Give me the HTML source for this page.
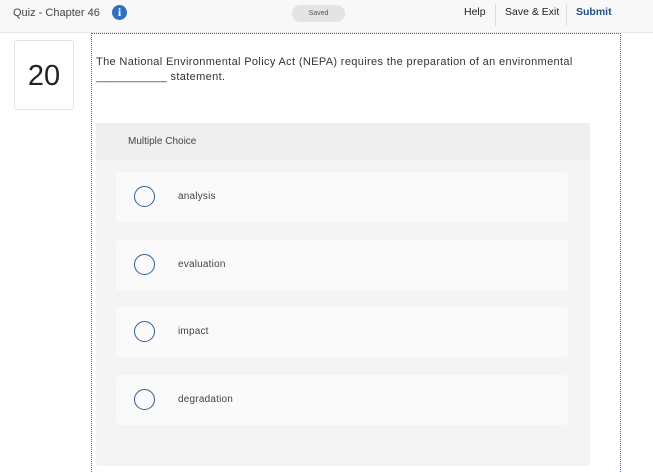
<!DOCTYPE html>
<html style="overflow:hidden;height:472px"><head><style>
body{margin:0;width:653px;height:472px;overflow:hidden;background:#fff;font-family:"Liberation Sans",sans-serif;position:relative;color:#333}
.hdr{position:absolute;left:0;top:0;width:653px;height:32px;background:#f8f8f8;border-bottom:1px solid #e6e6e6}
.a{position:absolute}
.opt{position:absolute;left:116px;width:452px;height:50px;background:#fafafa;border-radius:3px}
.opt .c{position:absolute;left:18px;top:14px;width:19px;height:19px;border:1.5px solid #2f5f94;border-radius:50%}
.opt .t{position:absolute;left:62px;top:19px;font-size:10px;color:#444;letter-spacing:0.2px}
</style></head><body>
<div class="hdr"></div>
<div class="a" style="left:13px;top:7px;font-size:11px;color:#444">Quiz - Chapter 46</div>
<div class="a" style="left:112px;top:5px;width:15px;height:15px;border-radius:50%;background:#2f6fbf;color:#fff;font-weight:bold;font-size:12px;text-align:center;line-height:15px;font-family:'Liberation Serif',serif">i</div>
<div class="a" style="left:292px;top:5px;width:53px;height:17px;border-radius:9px;background:#e4e4e4;font-size:7px;color:#555;text-align:center;line-height:17px">Saved</div>
<div class="a" style="left:464px;top:6px;font-size:10.5px;color:#222">Help</div>
<div class="a" style="left:495px;top:4px;width:1px;height:22px;background:#ddd"></div>
<div class="a" style="left:505px;top:6px;font-size:10.5px;color:#222">Save &amp; Exit</div>
<div class="a" style="left:566px;top:4px;width:1px;height:22px;background:#ddd"></div>
<div class="a" style="left:576px;top:6px;font-size:10.5px;color:#1f4f8a;font-weight:bold">Submit</div>
<div class="a" style="left:14px;top:40px;width:60px;height:70px;border:1px solid #e3e3e3;border-radius:3px;box-sizing:border-box;font-size:29px;color:#222;text-align:center;line-height:70px">20</div>
<div class="a" style="left:91px;top:33px;width:530px;height:439px;border:1px dotted #2a6fbf;border-bottom:none;box-sizing:border-box"></div>
<div class="a" style="left:96px;top:55px;font-size:11px;color:#333;line-height:15px;letter-spacing:0.35px;white-space:nowrap">The National Environmental Policy Act (NEPA) requires the preparation of an environmental<br>___________ statement.</div>
<div class="a" style="left:96px;top:123px;width:494px;height:343px;background:#f4f4f4;border-radius:2px"></div>
<div class="a" style="left:96px;top:123px;width:494px;height:37px;background:#efefef"></div>
<div class="a" style="left:128px;top:136px;font-size:10px;color:#444">Multiple Choice</div>
<div class="opt" style="top:172px"><div class="c"></div><div class="t">analysis</div></div>
<div class="opt" style="top:240px"><div class="c"></div><div class="t">evaluation</div></div>
<div class="opt" style="top:307px"><div class="c"></div><div class="t">impact</div></div>
<div class="opt" style="top:375px"><div class="c"></div><div class="t">degradation</div></div>
</body></html>
